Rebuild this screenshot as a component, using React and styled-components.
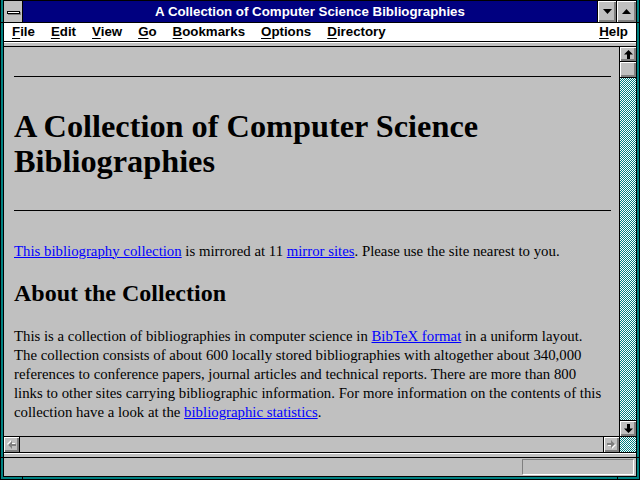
import React from 'react'
import styled, { createGlobalStyle } from 'styled-components'

const GlobalStyle = createGlobalStyle`
  html, body {
    margin: 0;
    padding: 0;
    background: #008080;
  }
  * {
    box-sizing: border-box;
  }
`

const bevel = `
  background: #c0c0c0;
  box-shadow: inset 1px 1px #ffffff, inset -1px -1px #808080, inset -2px -2px #808080;
`

const checker = `
  background: repeating-conic-gradient(#008080 0 25%, #ffffff 0 50%) 0 0 / 2px 2px;
`

const Frame = styled.div`
  width: 640px;
  height: 480px;
  border: 1px solid #000;
  border-top: 0;
  padding: 0 2px 2px;
  background:
    linear-gradient(#000, #000) 21px 0 / 1px 100% no-repeat,
    linear-gradient(#000, #000) 616px 0 / 1px 100% no-repeat,
    linear-gradient(#000, #000) 0 22px / 100% 1px no-repeat,
    linear-gradient(#000, #000) 0 457px / 100% 1px no-repeat,
    #008080;
`

const Inner = styled.div`
  height: 100%;
  border: 1px solid #000;
  display: flex;
  flex-direction: column;
  background: #c0c0c0;
  overflow: hidden;
`

const TitleBar = styled.div`
  display: flex;
  height: 22px;
  border-bottom: 1px solid #000;
  flex-shrink: 0;
`

const SysBox = styled.div`
  width: 19px;
  border-right: 1px solid #000;
  background: #c0c0c0;
  display: flex;
  align-items: center;
  justify-content: center;
`

const SysBar = styled.div`
  width: 13px;
  height: 3px;
  background: #fff;
  border: 1px solid #000;
  box-shadow: 1px 1px #808080;
  margin-top: 1px;
`

const Caption = styled.div`
  flex: 1;
  background: #000080;
  color: #fff;
  font-family: "Liberation Sans", Arial, sans-serif;
  font-weight: bold;
  font-size: 13.3px;
  display: flex;
  align-items: center;
  justify-content: center;
  padding-bottom: 1px;
`

const TitleButton = styled.div`
  width: ${p => p.$w}px;
  border-left: 1px solid #000;
  ${bevel}
  display: flex;
  align-items: center;
  justify-content: center;
`

const MenuBar = styled.div`
  display: flex;
  height: 19px;
  background: #fff;
  border-bottom: 1px solid #000;
  font-family: "Liberation Sans", Arial, sans-serif;
  font-weight: bold;
  font-size: 13.3px;
  color: #000;
  flex-shrink: 0;
`

const MenuItem = styled.div`
  padding: 0 8px;
  line-height: 18px;
  margin-left: ${p => (p.$right ? 'auto' : '0')};
  u {
    text-decoration-thickness: 1px;
    text-underline-offset: 2px;
  }
`

const Band = styled.div`
  height: 5px;
  background: #c0c0c0;
  border-top: 1px solid #fff;
  border-bottom: 1px solid #000;
  flex-shrink: 0;
`

const Main = styled.div`
  flex: 1;
  display: flex;
  min-height: 0;
`

const Viewport = styled.div`
  flex: 1;
  overflow: hidden;
  padding: 29px 8px 0 10px;
  font-family: "Liberation Serif", "Times New Roman", serif;
  color: #000;
`

const Rule = styled.hr`
  margin: 0;
  border: 0;
  height: 1px;
  background: #000;
`

const Heading = styled.h1`
  margin: 32px 0 31px;
  font-size: 32.3px;
  line-height: 35px;
  font-weight: bold;
`

const SubHeading = styled.h2`
  margin: 19px 0 20px;
  font-size: 24px;
  line-height: 28px;
  font-weight: bold;
`

const Para = styled.p`
  margin: ${p => p.$top || 0}px 0 0;
  font-size: 14.8px;
  line-height: ${p => p.$lh || 18}px;
  white-space: nowrap;
`

const Link = styled.a`
  color: #0000ff;
  text-decoration: underline;
  text-decoration-thickness: 1px;
`

const VScroll = styled.div`
  width: 17px;
  border-left: 1px solid #000;
  display: flex;
  flex-direction: column;
`

const ScrollBtn = styled.div`
  height: ${p => p.$h || 15}px;
  flex-shrink: 0;
  ${bevel}
  display: flex;
  align-items: center;
  justify-content: center;
  border-bottom: ${p => (p.$bb ? '1px solid #000' : '0')};
  border-top: ${p => (p.$bt ? '1px solid #000' : '0')};
`

const Track = styled.div`
  flex: 1;
  ${checker}
`

const HScroll = styled.div`
  height: 17px;
  display: flex;
  border-top: 1px solid #000;
  border-bottom: 1px solid #000;
  flex-shrink: 0;
`

const HButton = styled.div`
  width: 16px;
  ${bevel}
  display: flex;
  align-items: center;
  justify-content: center;
  border-right: ${p => (p.$br ? '1px solid #000' : '0')};
  border-left: ${p => (p.$bl ? '1px solid #000' : '0')};
`

const HTrack = styled.div`
  flex: 1;
  background: #c0c0c0;
`

const Corner = styled.div`
  width: 17px;
  border-left: 1px solid #000;
  ${checker}
`

const StatusBar = styled.div`
  height: 18px;
  display: flex;
  justify-content: flex-end;
  align-items: flex-start;
  padding: 1px 2px 0 0;
  flex-shrink: 0;
`

const StatusBox = styled.div`
  width: 112px;
  height: 16px;
  border-top: 1px solid #808080;
  border-left: 1px solid #808080;
  border-bottom: 1px solid #fff;
  border-right: 1px solid #fff;
`

const Tri = ({ up }) => (
  <svg width="9" height="5" viewBox="0 0 9 5">
    <path d={up ? 'M4.5 0 L9 5 L0 5 Z' : 'M0 0 L9 0 L4.5 5 Z'} fill="#000" />
  </svg>
)

const Arrow = ({ dir }) => {
  const up = 'M4.5 0 L9 4.5 L6 4.5 L6 9 L3 9 L3 4.5 L0 4.5 Z'
  return (
    <svg width="9" height="9" viewBox="0 0 9 9">
      <path d={up} fill="#000" transform={dir === 'down' ? 'rotate(180 4.5 4.5)' : ''} />
    </svg>
  )
}

const GreyArrow = ({ dir }) => {
  const r = 'M0 3 L4 3 L4 0 L8 4 L4 8 L4 5 L0 5 Z'
  const t = dir === 'left' ? 'rotate(180 4.5 4.5)' : ''
  return (
    <svg width="10" height="10" viewBox="0 0 10 10">
      <g transform={t}>
        <path d={r} fill="#fff" transform="translate(1 1)" />
        <path d={r} fill="#808080" />
      </g>
    </svg>
  )
}

const menus = ['File', 'Edit', 'View', 'Go', 'Bookmarks', 'Options', 'Directory']

export default function App() {
  return (
    <>
      <GlobalStyle />
      <Frame>
        <Inner>
          <TitleBar>
            <SysBox><SysBar /></SysBox>
            <Caption>A Collection of Computer Science Bibliographies</Caption>
            <TitleButton $w={19}><Tri /></TitleButton>
            <TitleButton $w={20}><Tri up /></TitleButton>
          </TitleBar>
          <MenuBar>
            {menus.map(m => (
              <MenuItem key={m}><u>{m[0]}</u>{m.slice(1)}</MenuItem>
            ))}
            <MenuItem $right><u>H</u>elp</MenuItem>
          </MenuBar>
          <Band />
          <Main>
            <Viewport>
              <Rule />
              <Heading>A Collection of Computer Science Bibliographies</Heading>
              <Rule />
              <Para $top={31}>
                <Link href="#">This bibliography collection</Link> is mirrored at 11{' '}
                <Link href="#">mirror sites</Link>. Please use the site nearest to you.
              </Para>
              <SubHeading>About the Collection</SubHeading>
              <Para $lh={19}>
                This is a collection of bibliographies in computer science in{' '}
                <Link href="#">BibTeX format</Link> in a uniform layout.<br />
                The collection consists of about 600 locally stored bibliographies with altogether about 340,000<br />
                references to conference papers, journal articles and technical reports. There are more than 800<br />
                links to other sites carrying bibliographic information. For more information on the contents of this<br />
                collection have a look at the <Link href="#">bibliographic statistics</Link>.
              </Para>
            </Viewport>
            <VScroll>
              <ScrollBtn $bb><Arrow dir="up" /></ScrollBtn>
              <ScrollBtn $bb $h={16} />
              <Track />
              <ScrollBtn $bt $h={16}><Arrow dir="down" /></ScrollBtn>
            </VScroll>
          </Main>
          <HScroll>
            <HButton $br><GreyArrow dir="left" /></HButton>
            <HTrack />
            <HButton $bl><GreyArrow dir="right" /></HButton>
            <Corner />
          </HScroll>
          <Band />
          <StatusBar>
            <StatusBox />
          </StatusBar>
        </Inner>
      </Frame>
    </>
  )
}
